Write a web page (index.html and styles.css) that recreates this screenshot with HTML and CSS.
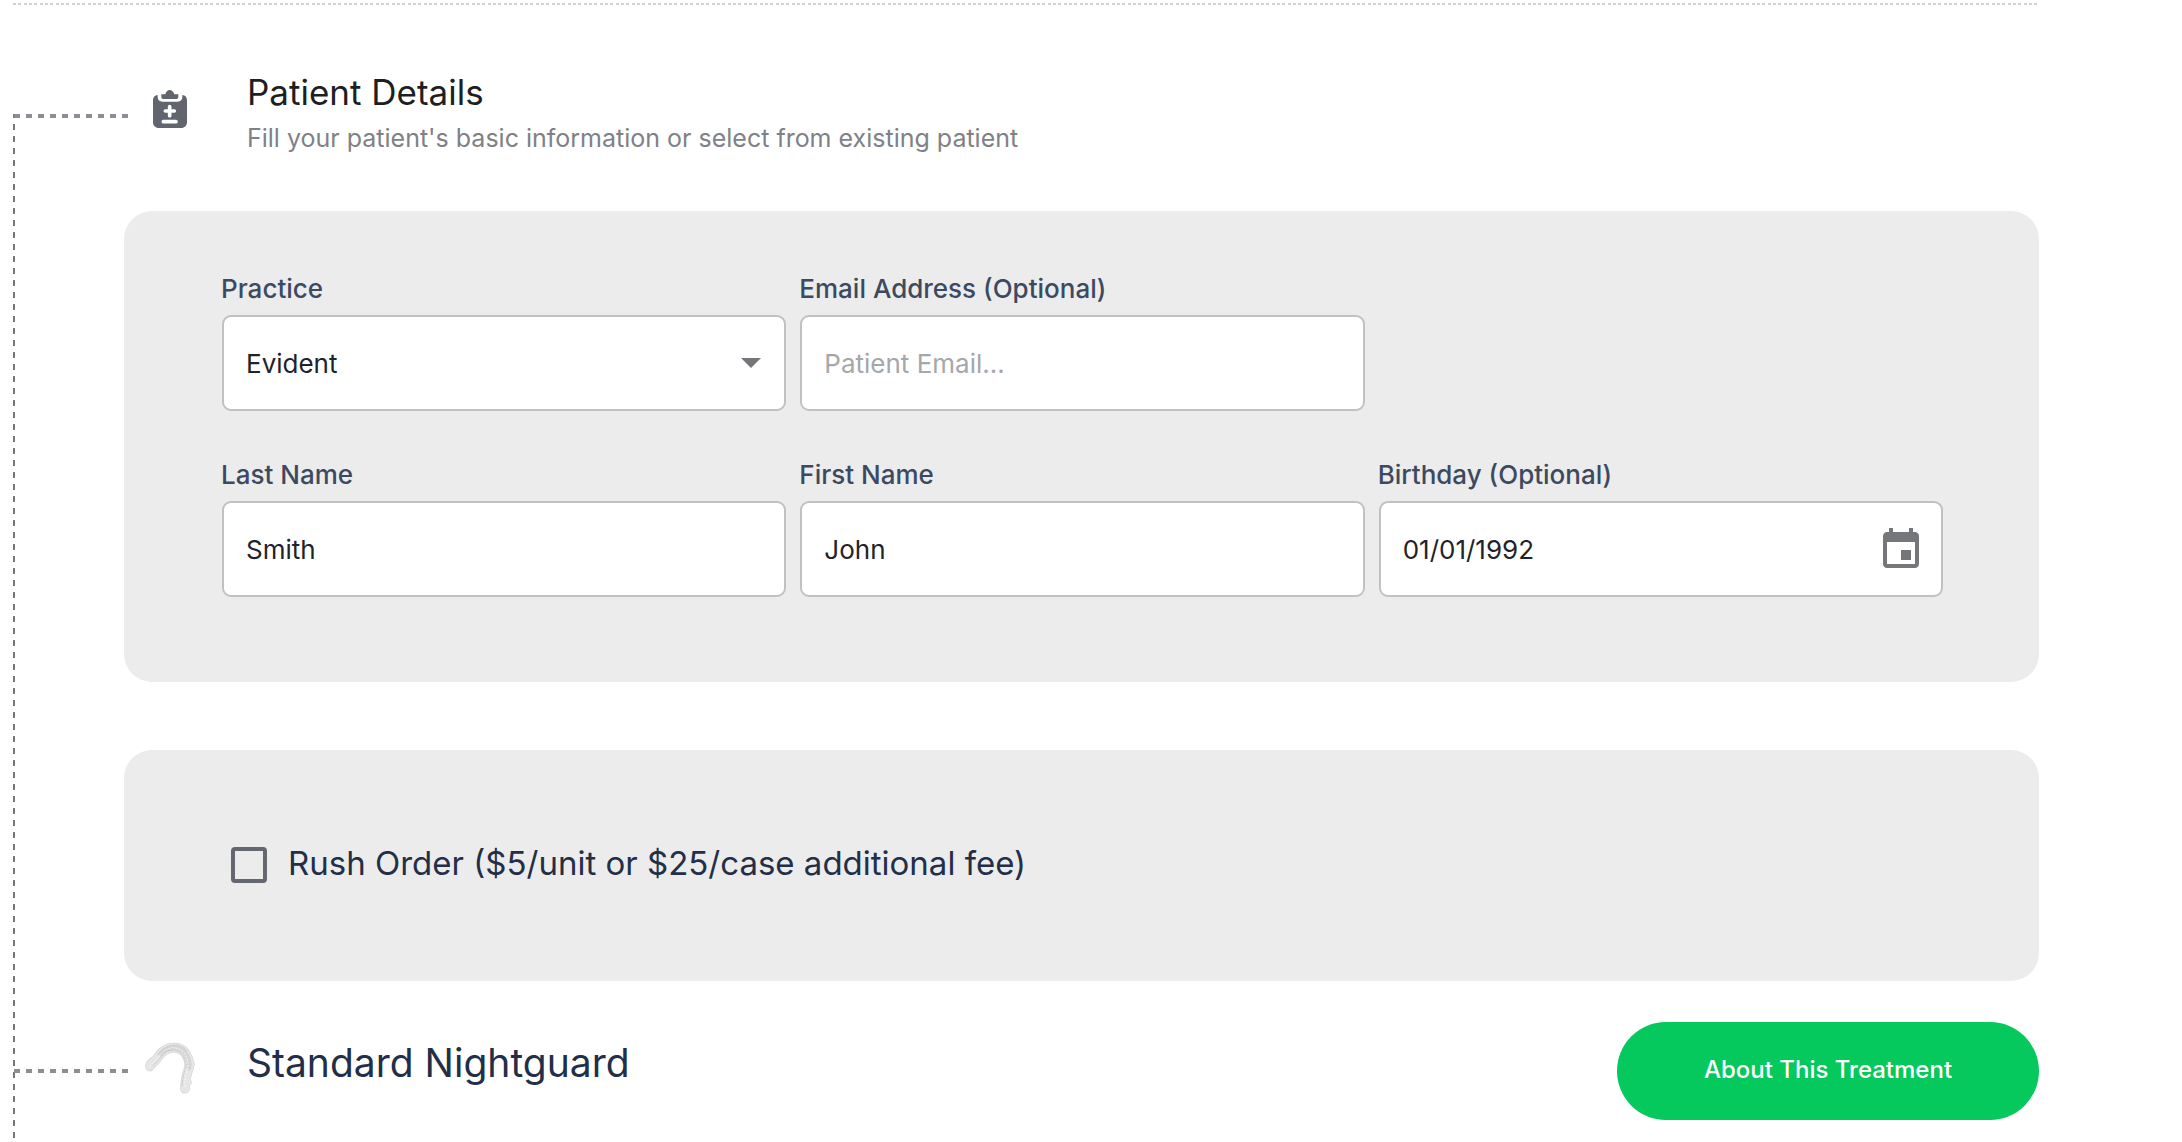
FILE: index.html
```html
<!DOCTYPE html>
<html lang="en">
<head>
  <meta charset="utf-8">
  <meta name="viewport" content="width=device-width, initial-scale=1">
  <title>Patient Details</title>
  <link rel="stylesheet" href="styles.css">
</head>
<body>
  <div class="page">
    <hr class="divider">
    <main class="steps">
      <section class="step">
        <header class="step-header">
          <span class="connector"></span>
          <span class="step-icon">
            <svg class="clipboard" viewBox="0 0 102 114" aria-hidden="true">
              <path fill="#62656e" d="M14 15C5 16 0 22 0 30v66c0 11 7 18 18 18h66c11 0 18-7 18-18V30c0-8-5-14-14-15v6c0 9-6 14-14 14H28c-8 0-14-5-14-14z"/>
              <path fill="#62656e" d="M25 13h12c2-8 7-13 13-13s12 5 14 13h12v7c0 5-3 7-7 7H32c-4 0-7-2-7-7z"/>
              <path stroke="#fff" stroke-width="11" stroke-linecap="round" d="M50 50v27M37 63h27M31 95h38"/>
            </svg>
          </span>
          <div class="step-text">
            <h2 class="step-title">Patient Details</h2>
            <p class="step-subtitle">Fill your patient's basic information or select from existing patient</p>
          </div>
        </header>

        <form class="card fields">
          <div class="field">
            <label class="field-label" for="practice">Practice</label>
            <div class="control">
              <select class="input" id="practice"><option>Evident</option></select>
              <svg class="arrow" viewBox="0 0 20 10" aria-hidden="true"><path fill="#757679" d="M0 0h20L10 10z"/></svg>
            </div>
          </div>
          <div class="field">
            <label class="field-label" for="email">Email Address (Optional)</label>
            <div class="control"><input class="input" id="email" type="email" placeholder="Patient Email..."></div>
          </div>
          <div class="field row-start">
            <label class="field-label" for="last-name">Last Name</label>
            <div class="control"><input class="input" id="last-name" type="text" value="Smith"></div>
          </div>
          <div class="field">
            <label class="field-label" for="first-name">First Name</label>
            <div class="control"><input class="input" id="first-name" type="text" value="John"></div>
          </div>
          <div class="field">
            <label class="field-label" for="birthday">Birthday (Optional)</label>
            <div class="control">
              <input class="input" id="birthday" type="text" value="01/01/1992">
              <button class="calendar" type="button" aria-label="Choose date">
                <svg viewBox="0 0 24 24" aria-hidden="true"><path fill="#757679" d="M17 12h-5v5h5v-5zM16 1v2H8V1H6v2H5c-1.11 0-1.99.9-1.99 2L3 19c0 1.1.89 2 2 2h14c1.1 0 2-.9 2-2V5c0-1.1-.9-2-2-2h-1V1h-2zm3 18H5V8h14v11z"/></svg>
              </button>
            </div>
          </div>
        </form>

        <div class="card rush">
          <label class="rush-label">
            <input class="checkbox" type="checkbox">
            <span>Rush Order ($5/unit or $25/case additional fee)</span>
          </label>
        </div>
      </section>

      <section class="step">
        <header class="step-header treatment">
          <span class="connector"></span>
          <span class="step-icon">
            <svg class="nightguard" viewBox="45 36 150 174" aria-hidden="true">
              <g fill="none" stroke-linecap="round" stroke-linejoin="round">
                <path stroke="#cfcfcf" stroke-width="29" d="M60 109Q62 103 66 101Q78 91 88 76Q104 56 128 53Q156 52 169 74Q181 94 177 114Q167 138 165 176"/>
                <path stroke="#cfcfcf" stroke-width="14" d="M55 100Q58 92 68 88M176 82L187 102M176 148L178 158"/>
                <path stroke="#e6e6e7" stroke-width="26" d="M60 109Q62 103 66 101Q78 91 88 76Q104 56 128 53Q156 52 169 74Q181 94 177 114Q167 138 165 176"/>
                <path stroke="#e6e6e7" stroke-width="11" d="M55 100Q58 92 68 88M176 82L187 102M176 148L178 158"/>
                <path stroke="#d6d6d8" stroke-width="14" d="M92 72Q106 56 128 53Q156 52 169 74Q181 94 177 114"/>
                <path stroke="#bebec0" stroke-width="3" stroke-dasharray="2 5" d="M70 106Q92 84 100 72Q114 60 130 61Q150 62 161 80Q170 96 167 112Q158 140 156 170M84 74Q104 48 128 46Q156 44 172 64"/>
                <path stroke="#fafafa" stroke-width="3" stroke-dasharray="3 7" d="M58 108Q84 86 92 72Q108 54 130 53Q154 54 167 76Q178 96 173 116Q164 142 164 174"/>
              </g>
            </svg>
          </span>
          <h2 class="treatment-title">Standard Nightguard</h2>
          <button class="about" type="button">About This Treatment</button>
        </header>
      </section>
    </main>
  </div>
</body>
</html>
```
FILE: styles.css
```css
* {
  box-sizing: border-box;
}

body {
  margin: 0;
  background: #fff;
  color: #1f232b;
  font-family: Inter, "Liberation Sans", sans-serif;
}

.page {
  display: flex;
  flex-direction: column;
  min-height: 100vh;
  padding: 3px 143px 0 13px;
}

/* three dots on a 16px tile */
.divider {
  width: 100%;
  height: 2px;
  margin: 0;
  border: 0;
  background: linear-gradient(to right,
    #d2d2d2 3px, transparent 3px 5px,
    #d2d2d2 5px 8px, transparent 8px 11px,
    #d2d2d2 11px 14px, transparent 14px) 0 0 / 16px 2px repeat-x;
}

/* the dashed rail runs from the first connector to the foot of the page */
.steps {
  flex: 1;
  padding-top: 66px;
  background:
    linear-gradient(#fff, #fff) 0 0 / 2px 109px no-repeat,
    linear-gradient(#75767a 6px, transparent 6px) 0 -1px / 2px 12px repeat-y;
}

.step-header {
  display: flex;
  align-items: flex-start;
}

.connector {
  flex: none;
  width: 114px;
  height: 4px;
  margin: 43px 0 0 1px;
  background: linear-gradient(to right, #8d8d95 6px, transparent 6px) 0 0 / 12px 4px repeat-x;
}

.step-icon {
  display: flex;
  flex: none;
  justify-content: center;
  width: 84px;
  margin-right: 35px;
}

.clipboard {
  width: 34px;
  height: 38px;
  margin-top: 19px;
}

.nightguard {
  width: 50px;
  height: 58px;
}

.step-title,
.step-subtitle,
.treatment-title {
  margin: 0;
  font-weight: 400;
}

.step-title {
  color: #1e1f24;
  font-size: 35px;
  line-height: 42px;
}

.step-subtitle {
  margin-top: 10px;
  color: #808186;
  font-size: 25px;
  line-height: 30px;
}

.card {
  margin-left: 111px;
  border-radius: 28px;
  background: #ececec;
}

.fields {
  display: grid;
  grid-template-columns: repeat(3, 1fr);
  gap: 48px 14px;
  margin-top: 58px;
  padding: 62px 96px 85px 98px;
}

.row-start {
  grid-column: 1;
}

.field-label {
  display: block;
  margin: 0 0 10px -1px;
  color: #3c4a61;
  font-size: 26px;
  font-weight: 500;
  line-height: 32px;
}

.control {
  position: relative;
}

.input {
  display: block;
  width: 100%;
  height: 96px;
  padding: 0 22px;
  border: 2px solid #c0c1c3;
  border-radius: 9px;
  background: #fff;
  color: #1f232b;
  font-family: inherit;
  font-size: 26px;
  appearance: none;
}

.input::placeholder {
  color: #a5a7ab;
}

.arrow {
  position: absolute;
  top: 43px;
  right: 25px;
  width: 20px;
  height: 10px;
  pointer-events: none;
}

.calendar {
  position: absolute;
  top: 25px;
  right: 18px;
  width: 48px;
  height: 48px;
  padding: 0;
  border: 0;
  background: none;
}

.calendar svg {
  display: block;
}

.rush {
  margin-top: 68px;
  padding: 93px 98px 98px 107px;
}

.rush-label {
  display: flex;
  align-items: flex-end;
  gap: 21px;
  color: #232f48;
  font-size: 33px;
  line-height: 40px;
}

.checkbox {
  flex: none;
  width: 36px;
  height: 36px;
  margin: 0;
  border: 4px solid #646770;
  border-radius: 4px;
  appearance: none;
}

.checkbox:checked {
  background: #646770;
}

.treatment {
  align-items: center;
  margin-top: 41px;
}

.treatment .connector {
  margin-top: 0;
}

.treatment-title {
  flex: 1;
  margin-bottom: 16px;
  color: #232f48;
  font-size: 39px;
  line-height: 48px;
}

.about {
  min-width: 422px;
  padding: 33px 48px 35px;
  border: 0;
  border-radius: 49px;
  background: #05c95c;
  color: #fff;
  font-family: inherit;
  font-size: 24px;
  font-weight: 500;
  line-height: 30px;
}
```
